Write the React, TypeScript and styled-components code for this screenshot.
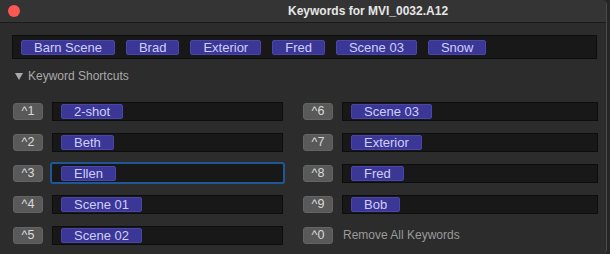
import styled, { createGlobalStyle } from "styled-components";

const GlobalStyle = createGlobalStyle`
  html, body {
    margin: 0;
    padding: 0;
    background: #262626;
  }
  body {
    font-family: "Liberation Sans", Arial, sans-serif;
  }
`;

const Window = styled.div`
  width: 607px;
  height: 254px;
  background: #2c2c2c;
  border-right: 1px solid #4a4a4a;
  box-sizing: border-box;
  border-radius: 0 5px 5px 0;
  overflow: hidden;
`;

const TitleBar = styled.div`
  position: relative;
  height: 22px;
  background: #343434;
  border-bottom: 1px solid #1b1b1b;
  display: flex;
  align-items: center;
  padding-left: 288px;
`;

const CloseDot = styled.span`
  position: absolute;
  left: 8px;
  top: 5px;
  width: 12px;
  height: 12px;
  border-radius: 50%;
  background: #fc5753;
`;

const Title = styled.div`
  color: #e6e6e6;
  font-size: 12px;
  font-weight: bold;
`;

const Body = styled.div`
  padding: 12px 9px 0 12px;
`;

const KeywordField = styled.div`
  height: 24px;
  box-sizing: border-box;
  background: #181818;
  border: 1px solid #0d0d0d;
  display: flex;
  align-items: center;
  gap: 11px;
  padding-left: 8px;
`;

const Token = styled.span`
  display: inline-flex;
  align-items: center;
  height: 15px;
  box-sizing: border-box;
  padding: 0 12px;
  background: #3b3796;
  border: 1px solid #4a46a8;
  border-radius: 2px;
  color: #cfcef8;
  font-size: 13px;
  line-height: 13px;
  white-space: nowrap;
`;

const SectionHeader = styled.div`
  display: flex;
  align-items: center;
  gap: 5px;
  margin: 9px 0 0 3px;
  height: 16px;
  color: #a9a9a9;
  font-size: 12px;
`;

const Triangle = styled.span`
  width: 0;
  height: 0;
  border-left: 4px solid transparent;
  border-right: 4px solid transparent;
  border-top: 7px solid #a9a9a9;
`;

const ShortcutGrid = styled.div`
  display: grid;
  grid-template-columns: 270px 295px;
  column-gap: 20px;
  row-gap: 13px;
  margin: 18px 0 0 1px;
  grid-auto-flow: column;
  grid-template-rows: repeat(5, 18px);
`;

const Row = styled.div`
  display: flex;
  align-items: center;
  gap: 9px;
  height: 18px;
`;

const KeyButton = styled.span`
  flex: none;
  width: 30px;
  height: 17px;
  box-sizing: border-box;
  background: #595959;
  border: 1px solid #636363;
  border-radius: 3px;
  color: #d9d9d9;
  font-size: 12.5px;
  display: flex;
  align-items: center;
  justify-content: center;
`;

const SlotField = styled.div<{ $focused?: boolean }>`
  flex: 1;
  height: ${({ $focused }) => ($focused ? "22px" : "19px")};
  margin: ${({ $focused }) => ($focused ? "0 -2px" : "0")};
  box-sizing: border-box;
  background: #181818;
  border: ${({ $focused }) =>
    $focused ? "2px solid #1f5796" : "1px solid #0d0d0d"};
  border-radius: ${({ $focused }) => ($focused ? "3px" : "0")};
  display: flex;
  align-items: center;
  padding-left: ${({ $focused }) => ($focused ? "9px" : "8px")};
`;

const RemoveLabel = styled.span`
  color: #9a9a9a;
  font-size: 12px;
  padding-left: 1px;
`;

const keywords = ["Barn Scene", "Brad", "Exterior", "Fred", "Scene 03", "Snow"];

const shortcuts: { key: string; value?: string; focused?: boolean }[] = [
  { key: "1", value: "2-shot" },
  { key: "2", value: "Beth" },
  { key: "3", value: "Ellen", focused: true },
  { key: "4", value: "Scene 01" },
  { key: "5", value: "Scene 02" },
  { key: "6", value: "Scene 03" },
  { key: "7", value: "Exterior" },
  { key: "8", value: "Fred" },
  { key: "9", value: "Bob" },
  { key: "0" },
];

export default function App() {
  return (
    <>
      <GlobalStyle />
      <Window>
        <TitleBar>
          <CloseDot />
          <Title>Keywords for MVI_0032.A12</Title>
        </TitleBar>
        <Body>
          <KeywordField>
            {keywords.map((k) => (
              <Token key={k}>{k}</Token>
            ))}
          </KeywordField>
          <SectionHeader>
            <Triangle />
            Keyword Shortcuts
          </SectionHeader>
          <ShortcutGrid>
            {shortcuts.map((s) => (
              <Row key={s.key}>
                <KeyButton>^{s.key}</KeyButton>
                {s.value ? (
                  <SlotField $focused={s.focused}>
                    <Token>{s.value}</Token>
                  </SlotField>
                ) : (
                  <RemoveLabel>Remove All Keywords</RemoveLabel>
                )}
              </Row>
            ))}
          </ShortcutGrid>
        </Body>
      </Window>
    </>
  );
}
